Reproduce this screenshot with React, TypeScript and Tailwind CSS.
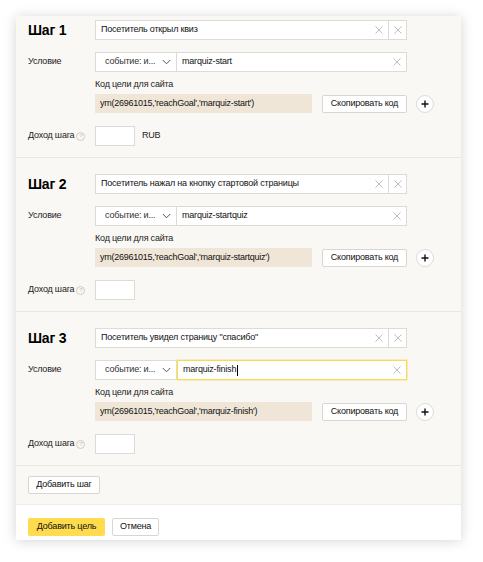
import type { ReactNode } from 'react'

type Step = {
  n: number
  name: string
  goal: string
  showRub: boolean
  focused?: boolean
}

const STEPS: Step[] = [
  { n: 1, name: 'Посетитель открыл квиз', goal: 'marquiz-start', showRub: true },
  { n: 2, name: 'Посетитель нажал на кнопку стартовой страницы', goal: 'marquiz-startquiz', showRub: false },
  { n: 3, name: 'Посетитель увидел страницу "спасибо"', goal: 'marquiz-finish', showRub: false, focused: true },
]

function Cross({ className = '' }: { className?: string }) {
  return (
    <svg width="8" height="8" viewBox="0 0 8 8" className={className}>
      <path d="M0.5 0.5 L7.5 7.5 M7.5 0.5 L0.5 7.5" stroke="#b5b5b5" strokeWidth="0.9" fill="none" />
    </svg>
  )
}

function Chevron() {
  return (
    <svg width="9" height="6" viewBox="0 0 9 6">
      <path d="M0.8 1 L4.5 4.8 L8.2 1" stroke="#555" strokeWidth="1" fill="none" />
    </svg>
  )
}

function Btn({ children, className = '' }: { children: ReactNode; className?: string }) {
  return (
    <button
      className={`h-[18px] rounded-[2px] border border-[#d9d6d2] bg-white flex items-center justify-center text-[9px] tracking-[-0.2px] text-[#111] ${className}`}
    >
      {children}
    </button>
  )
}

function StepBlock({ step, first }: { step: Step; first: boolean }) {
  return (
    <section
      className={`px-3 pb-[11px] ${first ? 'pt-[4px]' : 'pt-[16px] border-t border-[#ebe7e1]'}`}
    >
      {/* title row */}
      <div className="flex items-center h-[20px]">
        <div className="w-[67px] text-[14px] font-bold text-black tracking-[-0.2px]">Шаг {step.n}</div>
        <div className="flex w-[312px] h-[20px]">
          <div className="flex-1 flex items-center justify-between bg-white border border-[#dedbd7] pl-[5px] pr-[5px] text-[9px] tracking-[-0.2px] text-[#111]">
            <span>{step.name}</span>
            <Cross />
          </div>
          <div className="w-[18px] flex items-center justify-center bg-white border border-l-0 border-[#dedbd7]">
            <Cross />
          </div>
        </div>
      </div>

      {/* condition row */}
      <div className="flex items-center h-[20px] mt-[12px]">
        <div className="w-[67px] text-[9px] tracking-[-0.2px] text-[#222]">Условие</div>
        <div className="flex w-[312px] h-[20px]">
          <div className="w-[82px] flex items-center justify-between bg-white border border-[#dedbd7] pl-[9px] pr-[5px] text-[9px] tracking-[-0.2px] text-[#333]">
            <span>событие: и...</span>
            <Chevron />
          </div>
          <div
            className={`flex-1 flex items-center justify-between bg-white pl-[5px] pr-[5px] text-[9px] tracking-[-0.2px] text-[#111] ${
              step.focused ? 'border border-[#f3dc5a] shadow-[0_0_0_0.5px_#f6e27f]' : 'border border-l-0 border-[#dedbd7]'
            }`}
          >
            <span className="flex items-center">
              {step.goal}
              {step.focused && <span className="inline-block w-px h-[11px] bg-black ml-px" />}
            </span>
            <Cross />
          </div>
        </div>
      </div>

      {/* code label */}
      <div className="ml-[67px] mt-[6px] h-[14px] flex items-center text-[9px] tracking-[-0.2px] text-[#222]">
        Код цели для сайта
      </div>

      {/* code row */}
      <div className="ml-[67px] mt-[2px] flex items-center">
        <div className="w-[217px] h-[19px] bg-[#efe6d8] flex items-center pl-[5px] text-[9px] tracking-[-0.25px] text-[#111] whitespace-nowrap overflow-hidden">
          ym(26961015,'reachGoal','{step.goal}')
        </div>
        <Btn className="ml-[10px] w-[85px]">Скопировать код</Btn>
        <div className="ml-[9px] w-[18px] h-[18px] rounded-full bg-white border border-[#dedbd7] flex items-center justify-center">
          <svg width="8" height="8" viewBox="0 0 8 8">
            <path d="M4 0.5 V7.5 M0.5 4 H7.5" stroke="#111" strokeWidth="1.4" />
          </svg>
        </div>
      </div>

      {/* income row */}
      <div className="flex items-center h-[20px] mt-[13px]">
        <div className="w-[67px] flex items-center text-[9px] tracking-[-0.2px] text-[#222]">
          Доход шага
          <span className="ml-[2px] w-[9px] h-[9px] rounded-full border border-[#cfccc8] text-[#c2bfbb] text-[6px] leading-none flex items-center justify-center">
            ?
          </span>
        </div>
        <div className="w-[40px] h-[20px] bg-white border border-[#dedbd7]" />
        {step.showRub && <span className="ml-[7px] text-[9px] tracking-[-0.2px] text-[#222]">RUB</span>}
      </div>
    </section>
  )
}

export default function App() {
  return (
    <div
      className="min-h-screen bg-white p-4"
      style={{ fontFamily: '"Liberation Sans", Arial, sans-serif' }}
    >
      <div className="w-[445px] bg-[#faf8f5] shadow-[0_1px_12px_rgba(0,0,0,0.17)]">
        {STEPS.map((s, i) => (
          <StepBlock key={s.n} step={s} first={i === 0} />
        ))}

        {/* Add step */}
        <div className="border-t border-[#ebe7e1] px-3 pt-[10px] pb-[10px]">
          <Btn className="w-[72px]">Добавить шаг</Btn>
        </div>

        {/* Footer */}
        <div className="bg-white border-t border-[#efebe6] px-3 pt-[13px] pb-[4px] flex gap-[7px]">
          <button className="h-[18px] w-[77px] rounded-[2px] bg-[#ffdb4d] flex items-center justify-center text-[9px] tracking-[-0.2px] text-[#111]">
            Добавить цель
          </button>
          <Btn className="w-[47px]">Отмена</Btn>
        </div>
      </div>
    </div>
  )
}
